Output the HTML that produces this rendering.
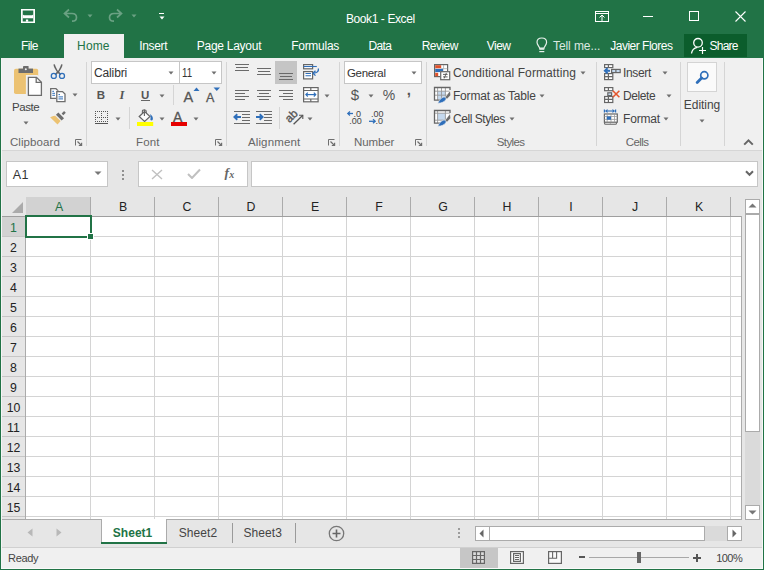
<!DOCTYPE html>
<html><head><meta charset="utf-8">
<style>
*{box-sizing:border-box}
html,body{margin:0;padding:0}
body{width:764px;height:570px;position:relative;overflow:hidden;background:#217346;font-family:"Liberation Sans",sans-serif;color:#444}
.a{position:absolute;display:block}
.t{position:absolute;white-space:nowrap;line-height:1}
</style></head><body>
<svg class="a" style="left:21px;top:9px;" width="14" height="14" viewBox="0 0 14 14"><path d="M0 0H14V14H0Z M1.7 1.4V12.6H12.3V1.4Z" fill="#fff" fill-rule="evenodd"/><path d="M1.7 5.4 L2.9 6.3 H11.1 L12.3 5.4 V9.3 H1.7Z" fill="#fff"/><rect x="4.9" y="10.5" width="2.3" height="2.2" fill="#fff"/></svg>
<svg class="a" style="left:62px;top:8px;" width="17" height="15" viewBox="0 0 17 15"><path d="M7 1.5 L2.5 5.5 L7 9.5 M2.5 5.5 H10 C13 5.5 14.5 7.5 14.5 9.5 C14.5 11.8 12.8 13.2 10 13.2" fill="none" stroke="rgba(255,255,255,0.33)" stroke-width="1.7"/></svg>
<svg class="a" style="left:86.5px;top:13.7px;" width="6" height="4" viewBox="0 0 6 4"><path d="M0.5 0.5 H5.5 L3.0 3.5 Z" fill="rgba(255,255,255,0.33)"/></svg>
<svg class="a" style="left:107px;top:8px;" width="17" height="15" viewBox="0 0 17 15"><path d="M10 1.5 L14.5 5.5 L10 9.5 M14.5 5.5 H7 C4 5.5 2.5 7.5 2.5 9.5 C2.5 11.8 4.2 13.2 7 13.2" fill="none" stroke="rgba(255,255,255,0.33)" stroke-width="1.7"/></svg>
<svg class="a" style="left:130.5px;top:13.7px;" width="6" height="4" viewBox="0 0 6 4"><path d="M0.5 0.5 H5.5 L3.0 3.5 Z" fill="rgba(255,255,255,0.33)"/></svg>
<div class="a" style="left:159px;top:13px;width:5px;height:1px;background:#ffffff;"></div>
<svg class="a" style="left:158.5px;top:15.5px;" width="6" height="4" viewBox="0 0 6 4"><path d="M0.5 0.5H5.5L3 3.5Z" fill="#fff"/></svg>
<div class="t" style="left:345.90px;top:13px;font-size:12px;color:#ffffff;letter-spacing:-0.396px;">Book1 - Excel</div>
<svg class="a" style="left:595px;top:11px;" width="14" height="11" viewBox="0 0 14 11"><rect x="0.5" y="0.5" width="13" height="10" fill="none" stroke="#fff"/><path d="M1 2.5H13" stroke="#fff"/><path d="M7 10V4 M4.5 6.5L7 4L9.5 6.5" fill="none" stroke="#fff"/></svg>
<div class="a" style="left:643px;top:16px;width:10px;height:1px;background:#ffffff;"></div>
<svg class="a" style="left:689px;top:11px;" width="10" height="10" viewBox="0 0 10 10"><rect x="0.5" y="0.5" width="9" height="9" fill="none" stroke="#fff"/></svg>
<svg class="a" style="left:734.5px;top:10.5px;" width="11" height="11" viewBox="0 0 11 11"><path d="M0.5 0.5L10.5 10.5M10.5 0.5L0.5 10.5" stroke="#fff" stroke-width="1.1"/></svg>
<div class="a" style="left:64px;top:34px;width:60px;height:24px;background:#f0f0f0;"></div>
<div class="a" style="left:684px;top:34px;width:63px;height:23px;background:#0b5d2c;"></div>
<div class="t" style="left:21.00px;top:40px;font-size:12px;color:#ffffff;letter-spacing:-0.617px;">File</div>
<div class="t" style="left:77.10px;top:40px;font-size:12px;color:#217346;letter-spacing:0.133px;">Home</div>
<div class="t" style="left:139.30px;top:40px;font-size:12px;color:#ffffff;letter-spacing:-0.340px;">Insert</div>
<div class="t" style="left:196.80px;top:40px;font-size:12px;color:#ffffff;letter-spacing:-0.270px;">Page Layout</div>
<div class="t" style="left:291.20px;top:40px;font-size:12px;color:#ffffff;letter-spacing:-0.271px;">Formulas</div>
<div class="t" style="left:368.50px;top:40px;font-size:12px;color:#ffffff;letter-spacing:-0.633px;">Data</div>
<div class="t" style="left:421.70px;top:40px;font-size:12px;color:#ffffff;letter-spacing:-0.520px;">Review</div>
<div class="t" style="left:486.80px;top:40px;font-size:12px;color:#ffffff;letter-spacing:-0.550px;">View</div>
<svg class="a" style="left:535px;top:37px;" width="14" height="17" viewBox="0 0 14 17"><path d="M4.6 11.2 C4.6 9.5 2 8.3 2 5.3 C2 2.8 4 1 6.8 1 C9.6 1 11.6 2.8 11.6 5.3 C11.6 8.3 9 9.5 9 11.2 Z" fill="none" stroke="#e8f0eb" stroke-width="1.2"/><rect x="4.3" y="11.2" width="5" height="1.6" fill="#e8f0eb"/><rect x="4.3" y="14" width="5" height="1.2" fill="#e8f0eb"/></svg>
<div class="t" style="left:553.00px;top:40px;font-size:12px;color:#dce9e1;letter-spacing:-0.078px;">Tell me...</div>
<div class="t" style="left:610.30px;top:40px;font-size:12px;color:#ffffff;letter-spacing:-0.508px;">Javier Flores</div>
<svg class="a" style="left:689px;top:37px;" width="18" height="18" viewBox="0 0 18 18"><circle cx="9" cy="5.8" r="4.3" fill="none" stroke="#fff" stroke-width="1.3"/><path d="M2.5 16.5 C3 12.5 5.5 10.8 8.3 10.3" fill="none" stroke="#fff" stroke-width="1.3"/><path d="M10 13.5H17M13.5 10V17" stroke="#fff" stroke-width="1.2"/></svg>
<div class="t" style="left:709.50px;top:40px;font-size:12px;color:#ffffff;letter-spacing:-0.750px;">Share</div>
<div class="a" style="left:1px;top:58px;width:762px;height:92px;background:#f0f0f0;"></div>
<div class="a" style="left:1px;top:150px;width:762px;height:1px;background:#d6d6d6;"></div>
<div class="a" style="left:86px;top:62px;width:1px;height:84px;background:#d5d5d5;"></div>
<div class="a" style="left:226px;top:62px;width:1px;height:84px;background:#d5d5d5;"></div>
<div class="a" style="left:339px;top:62px;width:1px;height:84px;background:#d5d5d5;"></div>
<div class="a" style="left:426px;top:62px;width:1px;height:84px;background:#d5d5d5;"></div>
<div class="a" style="left:596px;top:62px;width:1px;height:84px;background:#d5d5d5;"></div>
<div class="a" style="left:680px;top:62px;width:1px;height:84px;background:#d5d5d5;"></div>
<div class="a" style="left:724px;top:62px;width:1px;height:84px;background:#d5d5d5;"></div>
<svg class="a" style="left:13px;top:65px;" width="30" height="32" viewBox="0 0 30 32"><rect x="1" y="3.8" width="24.2" height="25.2" rx="1.8" fill="#ecc272"/>
<rect x="5.5" y="3.6" width="14.5" height="4.4" fill="#6d6d6d" stroke="#f0f0f0" stroke-width="0.0"/>
<path d="M10 4V1.6C10 1.2 10.3 1 10.7 1H15C15.4 1 15.6 1.2 15.6 1.6V4Z" fill="#6d6d6d"/>
<circle cx="12.8" cy="4.3" r="1" fill="#f0f0f0"/>
<path d="M14 11H24L29 16V31H14Z" fill="#fff" stroke="#f0f0f0" stroke-width="2.2"/>
<path d="M15.4 12.3H23.5L28.4 17.2V30.4H15.4Z" fill="#fff" stroke="#6d6d6d" stroke-width="1.3"/>
<path d="M23.2 12.3V17.4H28.4" fill="none" stroke="#6d6d6d" stroke-width="1.3"/></svg>
<div class="t" style="left:12.10px;top:102px;font-size:11.5px;color:#444;letter-spacing:-0.475px;">Paste</div>
<svg class="a" style="left:22.7px;top:120.8px;" width="6" height="4" viewBox="0 0 6 4"><path d="M0.5 0.5 H5.5 L3.0 3.5 Z" fill="#6f6f6f"/></svg>
<svg class="a" style="left:48px;top:62px;" width="20" height="20" viewBox="0 0 20 20"><path d="M5.4 2.6 C5.8 5.5 7.6 8.2 10 11.5 L11 10.8 C9 7.6 7.6 4.8 6.8 2.3Z" fill="#666"/>
<path d="M14.6 2.6 C14.2 5.5 12.4 8.2 10 11.5 L9 10.8 C11 7.6 12.4 4.8 13.2 2.3Z" fill="#666"/>
<path d="M7.3 12.7 L10 9.6 L12.7 12.7" fill="none" stroke="#666" stroke-width="1.6"/>
<circle cx="5.8" cy="13.9" r="2.5" fill="none" stroke="#2f6fba" stroke-width="1.3"/><circle cx="14" cy="13.9" r="2.5" fill="none" stroke="#2f6fba" stroke-width="1.3"/></svg>
<svg class="a" style="left:49px;top:87px;" width="18" height="16" viewBox="0 0 18 16"><path d="M1.7 1.7H7L9 3.7V11.3H1.7Z" fill="#fff" stroke="#6d6d6d" stroke-width="1.3"/>
<path d="M3.3 4.3H5 M3.3 6.3H6 M3.3 8.3H6" stroke="#2f6fba" stroke-width="1"/>
<path d="M7.8 4.6H13.5L16 7.1V14.6H7.8Z" fill="#fff" stroke="#f0f0f0" stroke-width="1.6"/>
<path d="M7.8 4.6H13.5L16 7.1V14.6H7.8Z" fill="#fff" stroke="#6d6d6d" stroke-width="1.3"/>
<path d="M9.5 7.6H11 M9.5 9.9H14 M9.5 11.9H14" stroke="#2f6fba" stroke-width="1"/></svg>
<svg class="a" style="left:71.5px;top:93.4px;" width="6" height="4" viewBox="0 0 6 4"><path d="M0.5 0.5 H5.5 L3.0 3.5 Z" fill="#6f6f6f"/></svg>
<svg class="a" style="left:48px;top:108px;" width="20" height="20" viewBox="0 0 20 20"><path d="M13.61 5.59 L16.09 3.11 L17.79 4.81 L15.31 7.29 Z" fill="#6d6d6d"/>
<path d="M7.97 6.87 L10.37 4.47 L16.03 10.13 L13.63 12.53 Z" fill="#6d6d6d"/>
<path d="M7.2 7.7 L12.6 13.1 L9.5 16.5 L2.1 9.3 L5.3 8.1 Z" fill="#ecc272"/></svg>
<div class="t" style="left:9.90px;top:137px;font-size:11.5px;color:#666;letter-spacing:0.087px;">Clipboard</div>
<svg class="a" style="left:75px;top:139px;" width="8" height="7" viewBox="0 0 8 7"><path d="M0.5 6.5V0.5H6.5" fill="none" stroke="#6f6f6f"/><path d="M2.5 2.5L6.5 6.5 M3.8 6.6H6.6V3.8" fill="none" stroke="#6f6f6f" stroke-width="1.2"/></svg>
<div class="a" style="left:91px;top:61px;width:89px;height:23px;background:#fff;border:1px solid #c6c6c6"></div>
<div class="a" style="left:179px;top:61px;width:43px;height:23px;background:#fff;border:1px solid #c6c6c6"></div>
<div class="t" style="left:94.00px;top:67px;font-size:12px;color:#333;letter-spacing:-0.133px;">Calibri</div>
<div class="t" style="left:182.20px;top:67px;font-size:12px;color:#333;transform:scaleX(0.81);transform-origin:0 0;">11</div>
<svg class="a" style="left:168.4px;top:71.0px;" width="6" height="4" viewBox="0 0 6 4"><path d="M0.5 0.5 H5.5 L3.0 3.5 Z" fill="#6f6f6f"/></svg>
<svg class="a" style="left:211.4px;top:71.0px;" width="6" height="4" viewBox="0 0 6 4"><path d="M0.5 0.5 H5.5 L3.0 3.5 Z" fill="#6f6f6f"/></svg>
<div class="t" style="left:96.80px;top:90px;font-size:11.5px;color:#555;font-weight:bold;">B</div>
<div class="t" style="left:119.50px;top:89px;font-size:12.5px;color:#555;font-weight:bold;font-family:'Liberation Serif',serif;"><i>I</i></div>
<div class="t" style="left:141.10px;top:90px;font-size:11.5px;color:#555;font-weight:bold;">U</div>
<div class="a" style="left:141px;top:100px;width:9px;height:1px;background:#666;"></div>
<svg class="a" style="left:159.4px;top:93.7px;" width="6" height="4" viewBox="0 0 6 4"><path d="M0.5 0.5 H5.5 L3.0 3.5 Z" fill="#6f6f6f"/></svg>
<div class="a" style="left:173px;top:85px;width:1px;height:20px;background:#d5d5d5;"></div>
<div class="t" style="left:183.50px;top:90px;font-size:14.5px;color:#555;-webkit-text-stroke:0.3px #555;">A</div>
<svg class="a" style="left:193px;top:87px;" width="7" height="5" viewBox="0 0 7 5"><path d="M0.5 4H6.5L3.5 0.5Z" fill="#2f6fba"/></svg>
<div class="t" style="left:206.00px;top:92px;font-size:12.5px;color:#555;-webkit-text-stroke:0.3px #555;">A</div>
<svg class="a" style="left:213px;top:87px;" width="8" height="5" viewBox="0 0 8 5"><path d="M0.5 0.5H7L3.8 4Z" fill="#2f6fba"/></svg>
<svg class="a" style="left:94px;top:110px;" width="15" height="15" viewBox="0 0 15 15"><rect x="13" y="3" width="1" height="1" fill="#555"/><rect x="13" y="9" width="1" height="1" fill="#555"/><rect x="7" y="5" width="1" height="1" fill="#555"/><rect x="5" y="11" width="1" height="1" fill="#555"/><rect x="7" y="11" width="1" height="1" fill="#555"/><rect x="1" y="1" width="1" height="1" fill="#555"/><rect x="1" y="7" width="1" height="1" fill="#555"/><rect x="3" y="1" width="1" height="1" fill="#555"/><rect x="3" y="7" width="1" height="1" fill="#555"/><rect x="9" y="11" width="1" height="1" fill="#555"/><rect x="13" y="5" width="1" height="1" fill="#555"/><rect x="5" y="1" width="1" height="1" fill="#555"/><rect x="5" y="7" width="1" height="1" fill="#555"/><rect x="11" y="11" width="1" height="1" fill="#555"/><rect x="7" y="1" width="1" height="1" fill="#555"/><rect x="7" y="7" width="1" height="1" fill="#555"/><rect x="13" y="11" width="1" height="1" fill="#555"/><rect x="9" y="1" width="1" height="1" fill="#555"/><rect x="9" y="7" width="1" height="1" fill="#555"/><rect x="1" y="3" width="1" height="1" fill="#555"/><rect x="1" y="9" width="1" height="1" fill="#555"/><rect x="11" y="1" width="1" height="1" fill="#555"/><rect x="11" y="7" width="1" height="1" fill="#555"/><rect x="13" y="1" width="1" height="1" fill="#555"/><rect x="13" y="7" width="1" height="1" fill="#555"/><rect x="7" y="3" width="1" height="1" fill="#555"/><rect x="7" y="9" width="1" height="1" fill="#555"/><rect x="1" y="5" width="1" height="1" fill="#555"/><rect x="1" y="11" width="1" height="1" fill="#555"/><rect x="3" y="11" width="1" height="1" fill="#555"/><rect x="1" y="13" width="13" height="1" fill="#555"/></svg>
<svg class="a" style="left:115.2px;top:116.7px;" width="6" height="4" viewBox="0 0 6 4"><path d="M0.5 0.5 H5.5 L3.0 3.5 Z" fill="#6f6f6f"/></svg>
<div class="a" style="left:129px;top:107px;width:1px;height:22px;background:#d5d5d5;"></div>
<svg class="a" style="left:136px;top:108px;" width="20" height="19" viewBox="0 0 20 19"><path d="M6.4 6.5V3.2C6.4 2.4 7 2 7.8 2H9C9.8 2 10.2 2.4 10.2 3.2V6.5" fill="none" stroke="#666" stroke-width="1.1"/>
<path d="M3.2 8.5 L8.6 3.6 L14 8.5 L8.6 13.4 Z" fill="#fff" stroke="#666" stroke-width="1.2"/>
<path d="M8.4 8V1.5" stroke="#666" stroke-width="1.1"/>
<path d="M14 6 C16.2 7.5 17.3 9.5 16.8 11.5 C16.4 12.5 15.2 12.7 14.4 12 L14.6 8.6Z" fill="#2f6fba"/>
<rect x="1" y="14" width="16.2" height="4" fill="#ffff00"/></svg>
<svg class="a" style="left:158.5px;top:116.7px;" width="6" height="4" viewBox="0 0 6 4"><path d="M0.5 0.5 H5.5 L3.0 3.5 Z" fill="#6f6f6f"/></svg>
<div class="t" style="left:173.00px;top:110px;font-size:14px;color:#555;-webkit-text-stroke:0.3px #555;">A</div>
<div class="a" style="left:171px;top:122px;width:16px;height:4px;background:#e60000;"></div>
<svg class="a" style="left:192.5px;top:116.7px;" width="6" height="4" viewBox="0 0 6 4"><path d="M0.5 0.5 H5.5 L3.0 3.5 Z" fill="#6f6f6f"/></svg>
<div class="t" style="left:136.10px;top:137px;font-size:11.5px;color:#666;letter-spacing:0.133px;">Font</div>
<svg class="a" style="left:215px;top:139px;" width="8" height="7" viewBox="0 0 8 7"><path d="M0.5 6.5V0.5H6.5" fill="none" stroke="#6f6f6f"/><path d="M2.5 2.5L6.5 6.5 M3.8 6.6H6.6V3.8" fill="none" stroke="#6f6f6f" stroke-width="1.2"/></svg>
<div class="a" style="left:235px;top:64px;width:14px;height:1px;background:#6a6a6a;"></div>
<div class="a" style="left:236px;top:67px;width:12px;height:1px;background:#6a6a6a;"></div>
<div class="a" style="left:235px;top:70px;width:14px;height:1px;background:#6a6a6a;"></div>
<div class="a" style="left:257px;top:68px;width:14px;height:1px;background:#6a6a6a;"></div>
<div class="a" style="left:258px;top:71px;width:12px;height:1px;background:#6a6a6a;"></div>
<div class="a" style="left:257px;top:74px;width:14px;height:1px;background:#6a6a6a;"></div>
<div class="a" style="left:275px;top:61px;width:22px;height:23px;background:#c5c5c5;"></div>
<div class="a" style="left:279px;top:73px;width:14px;height:1px;background:#6a6a6a;"></div>
<div class="a" style="left:280px;top:76px;width:12px;height:1px;background:#6a6a6a;"></div>
<div class="a" style="left:279px;top:79px;width:14px;height:1px;background:#6a6a6a;"></div>
<svg class="a" style="left:302px;top:63px;" width="19" height="17" viewBox="0 0 19 17"><rect x="1.6" y="1.6" width="9" height="4.2" fill="#fff" stroke="#666" stroke-width="1.2"/>
<path d="M1.6 3.5H14.8" stroke="#2f6fba" stroke-width="1.1"/>
<rect x="1.6" y="8.6" width="9" height="7.3" fill="#fff" stroke="#666" stroke-width="1.2"/>
<path d="M3.5 10.5H9 M3.5 12.8H9" stroke="#2f6fba" stroke-width="1.1"/>
<path d="M16.4 5.5 C16.8 8.3 15 10.2 11.5 10.2" fill="none" stroke="#2f6fba" stroke-width="1.3"/>
<path d="M13.5 7.8 L11 10.2 L13.5 12.6" fill="none" stroke="#2f6fba" stroke-width="1.3"/></svg>
<div class="a" style="left:235px;top:90px;width:14px;height:1px;background:#6a6a6a;"></div>
<div class="a" style="left:235px;top:93px;width:10px;height:1px;background:#6a6a6a;"></div>
<div class="a" style="left:235px;top:96px;width:14px;height:1px;background:#6a6a6a;"></div>
<div class="a" style="left:235px;top:99px;width:10px;height:1px;background:#6a6a6a;"></div>
<div class="a" style="left:257px;top:90px;width:14px;height:1px;background:#6a6a6a;"></div>
<div class="a" style="left:259px;top:93px;width:10px;height:1px;background:#6a6a6a;"></div>
<div class="a" style="left:257px;top:96px;width:14px;height:1px;background:#6a6a6a;"></div>
<div class="a" style="left:259px;top:99px;width:10px;height:1px;background:#6a6a6a;"></div>
<div class="a" style="left:279px;top:90px;width:14px;height:1px;background:#6a6a6a;"></div>
<div class="a" style="left:283px;top:93px;width:10px;height:1px;background:#6a6a6a;"></div>
<div class="a" style="left:279px;top:96px;width:14px;height:1px;background:#6a6a6a;"></div>
<div class="a" style="left:283px;top:99px;width:10px;height:1px;background:#6a6a6a;"></div>
<svg class="a" style="left:302px;top:86px;" width="18" height="17" viewBox="0 0 18 17"><rect x="1.6" y="1.6" width="14.5" height="14.2" fill="#fff" stroke="#666" stroke-width="1.2"/>
<path d="M1.6 4.5H16 M1.6 13H16 M8.8 1.6V4.5 M8.8 13V15.8" stroke="#666" stroke-width="1.2"/>
<path d="M4 8.6H13.6" stroke="#2f6fba" stroke-width="1.2"/><path d="M5.8 6.7L3.9 8.6L5.8 10.5 M11.8 6.7L13.7 8.6L11.8 10.5" fill="none" stroke="#2f6fba" stroke-width="1.2"/></svg>
<svg class="a" style="left:324.2px;top:93.5px;" width="6" height="4" viewBox="0 0 6 4"><path d="M0.5 0.5 H5.5 L3.0 3.5 Z" fill="#6f6f6f"/></svg>
<div class="a" style="left:234px;top:111px;width:16px;height:1px;background:#6a6a6a;"></div>
<div class="a" style="left:256px;top:111px;width:16px;height:1px;background:#6a6a6a;"></div>
<div class="a" style="left:234px;top:123px;width:16px;height:1px;background:#6a6a6a;"></div>
<div class="a" style="left:256px;top:123px;width:16px;height:1px;background:#6a6a6a;"></div>
<div class="a" style="left:242px;top:114px;width:8px;height:1px;background:#6a6a6a;"></div>
<div class="a" style="left:264px;top:114px;width:8px;height:1px;background:#6a6a6a;"></div>
<div class="a" style="left:242px;top:117px;width:8px;height:1px;background:#6a6a6a;"></div>
<div class="a" style="left:264px;top:117px;width:8px;height:1px;background:#6a6a6a;"></div>
<div class="a" style="left:242px;top:120px;width:8px;height:1px;background:#6a6a6a;"></div>
<div class="a" style="left:264px;top:120px;width:8px;height:1px;background:#6a6a6a;"></div>
<svg class="a" style="left:233px;top:113px;" width="9" height="8" viewBox="0 0 9 8"><path d="M1.5 4H8" stroke="#2f6fba" stroke-width="2"/><path d="M4.3 1.2L1.4 4L4.3 6.8" fill="none" stroke="#2f6fba" stroke-width="1.9"/></svg>
<svg class="a" style="left:255px;top:113px;" width="9" height="8" viewBox="0 0 9 8"><path d="M1 4H7.5" stroke="#2f6fba" stroke-width="2"/><path d="M4.7 1.2L7.6 4L4.7 6.8" fill="none" stroke="#2f6fba" stroke-width="1.9"/></svg>
<div class="a" style="left:279px;top:107px;width:1px;height:22px;background:#d5d5d5;"></div>
<svg class="a" style="left:284px;top:108px;" width="24" height="18" viewBox="0 0 24 18"><text x="0" y="0" transform="translate(5.6 15.2) rotate(-45)" font-family="Liberation Sans" font-size="11.5" fill="#555" stroke="#555" stroke-width="0.35">ab</text>
<path d="M9.6 16.3 L18.8 7.2" stroke="#555" stroke-width="1.3"/><path d="M15 7.2H18.8V11" fill="none" stroke="#555" stroke-width="1.1"/></svg>
<svg class="a" style="left:306.5px;top:116.5px;" width="6" height="4" viewBox="0 0 6 4"><path d="M0.5 0.5 H5.5 L3.0 3.5 Z" fill="#6f6f6f"/></svg>
<div class="t" style="left:247.90px;top:137px;font-size:11.5px;color:#666;letter-spacing:0.144px;">Alignment</div>
<svg class="a" style="left:327.5px;top:139px;" width="8" height="7" viewBox="0 0 8 7"><path d="M0.5 6.5V0.5H6.5" fill="none" stroke="#6f6f6f"/><path d="M2.5 2.5L6.5 6.5 M3.8 6.6H6.6V3.8" fill="none" stroke="#6f6f6f" stroke-width="1.2"/></svg>
<div class="a" style="left:344px;top:61px;width:78px;height:23px;background:#fff;border:1px solid #c6c6c6"></div>
<div class="t" style="left:346.90px;top:68px;font-size:11.5px;color:#333;letter-spacing:-0.300px;">General</div>
<svg class="a" style="left:411.3px;top:71.0px;" width="6" height="4" viewBox="0 0 6 4"><path d="M0.5 0.5 H5.5 L3.0 3.5 Z" fill="#6f6f6f"/></svg>
<div class="t" style="left:350.80px;top:87px;font-size:15px;color:#555;">$</div>
<svg class="a" style="left:368.4px;top:93.8px;" width="6" height="4" viewBox="0 0 6 4"><path d="M0.5 0.5 H5.5 L3.0 3.5 Z" fill="#6f6f6f"/></svg>
<div class="t" style="left:382.80px;top:88px;font-size:14px;color:#555;">%</div>
<div class="t" style="left:406.80px;top:82px;font-size:15px;color:#555;font-weight:bold;">,</div>
<svg class="a" style="left:346px;top:109px;" width="18" height="17" viewBox="0 0 18 17"><path d="M2 4.5H7" stroke="#2f6fba" stroke-width="1.3"/><path d="M4 2.5L1.8 4.5L4 6.5" fill="none" stroke="#2f6fba" stroke-width="1.3"/>
<text x="7.5" y="7.8" font-family="Liberation Sans" font-size="9" fill="#444">.0</text>
<text x="3.2" y="14.9" font-family="Liberation Sans" font-size="9" fill="#444">.00</text></svg>
<svg class="a" style="left:367px;top:109px;" width="18" height="17" viewBox="0 0 18 17"><text x="4" y="7.8" font-family="Liberation Sans" font-size="9" fill="#444">.00</text>
<path d="M2 12.3H8" stroke="#2f6fba" stroke-width="1.3"/><path d="M6 10.3L8.2 12.3L6 14.3" fill="none" stroke="#2f6fba" stroke-width="1.3"/>
<text x="8.6" y="14.9" font-family="Liberation Sans" font-size="9" fill="#444">.0</text></svg>
<div class="t" style="left:354.00px;top:137px;font-size:11.5px;color:#666;letter-spacing:-0.100px;">Number</div>
<svg class="a" style="left:415px;top:139px;" width="8" height="7" viewBox="0 0 8 7"><path d="M0.5 6.5V0.5H6.5" fill="none" stroke="#6f6f6f"/><path d="M2.5 2.5L6.5 6.5 M3.8 6.6H6.6V3.8" fill="none" stroke="#6f6f6f" stroke-width="1.2"/></svg>
<svg class="a" style="left:433px;top:63px;" width="18" height="18" viewBox="0 0 18 18"><rect x="1.6" y="1.6" width="13" height="12" fill="#fff" stroke="#666" stroke-width="1.2"/>
<rect x="2.2" y="2.2" width="6" height="3.1" fill="#e0522b"/>
<path d="M10.6 2V5.6 M8.2 5.7H14.4" stroke="#aaa" stroke-width="0.8"/>
<rect x="2.2" y="5.9" width="8" height="3.2" fill="#2f6fba"/>
<rect x="2.2" y="9.8" width="3" height="3.4" fill="#e0522b"/>
<rect x="7.2" y="8.2" width="10" height="9" fill="#f0f0f0"/>
<rect x="7.7" y="8.7" width="9" height="8" fill="#fff" stroke="#666" stroke-width="1.2"/>
<path d="M10 11.4H14.6 M10 13.9H14.6 M13.4 9.9L11.2 15.4" stroke="#555" stroke-width="0.9"/></svg>
<div class="t" style="left:453.00px;top:67px;font-size:12px;color:#444;letter-spacing:0.107px;">Conditional Formatting</div>
<svg class="a" style="left:579.5px;top:71.0px;" width="6" height="4" viewBox="0 0 6 4"><path d="M0.5 0.5 H5.5 L3.0 3.5 Z" fill="#6f6f6f"/></svg>
<svg class="a" style="left:433px;top:86px;" width="18" height="18" viewBox="0 0 18 18"><path d="M1.5 1.5H17V4.5L11 14.1H1.5Z" fill="#fff"/>
<rect x="4.6" y="5.2" width="8" height="8.4" fill="#c5d9ee"/><path d="M4.6 1.6V14 M8.5 1.6V14 M12.4 1.6V14 M1.6 5.2H17 M1.6 9.2H17" stroke="#999" stroke-width="0.9"/>
<path d="M8 14.1H1.5V1.5H17V4" fill="none" stroke="#666" stroke-width="1.3"/>
<path d="M11 12.5 L16.8 4.5 L18 4.5 L18 15 L11 15 Z" fill="#f0f0f0"/>
<path d="M12 11.8 L17 5.2 L17.4 9.2 L14 12.8 Z" fill="#6d6d6d"/>
<path d="M4.8 17.2 C6.2 14 8.3 11.6 10.8 11.1 C12.6 10.8 13.6 12.3 12.8 13.8 C11.6 15.9 8.2 17.2 4.8 17.2Z" fill="#2f6fba" stroke="#f0f0f0" stroke-width="0.6"/></svg>
<div class="t" style="left:453.00px;top:90px;font-size:12px;color:#444;letter-spacing:-0.207px;">Format as Table</div>
<svg class="a" style="left:539.0px;top:94.0px;" width="6" height="4" viewBox="0 0 6 4"><path d="M0.5 0.5 H5.5 L3.0 3.5 Z" fill="#6f6f6f"/></svg>
<svg class="a" style="left:433px;top:109px;" width="18" height="18" viewBox="0 0 18 18"><path d="M1.5 1.5H17V4.5L11 14.1H1.5Z" fill="#fff"/>
<rect x="4.6" y="4.2" width="8" height="7" fill="#c5d9ee"/><path d="M4.6 1.6V14 M12.4 1.6V14 M1.6 4.2H17 M1.6 11.2H17" stroke="#999" stroke-width="0.9"/>
<path d="M8 14.1H1.5V1.5H17V4" fill="none" stroke="#666" stroke-width="1.3"/>
<path d="M11 12.5 L16.8 4.5 L18 4.5 L18 15 L11 15 Z" fill="#f0f0f0"/>
<path d="M12 11.8 L17 5.2 L17.4 9.2 L14 12.8 Z" fill="#6d6d6d"/>
<path d="M4.8 17.2 C6.2 14 8.3 11.6 10.8 11.1 C12.6 10.8 13.6 12.3 12.8 13.8 C11.6 15.9 8.2 17.2 4.8 17.2Z" fill="#2f6fba" stroke="#f0f0f0" stroke-width="0.6"/></svg>
<div class="t" style="left:453.00px;top:113px;font-size:12px;color:#444;letter-spacing:-0.440px;">Cell Styles</div>
<svg class="a" style="left:508.5px;top:117.0px;" width="6" height="4" viewBox="0 0 6 4"><path d="M0.5 0.5 H5.5 L3.0 3.5 Z" fill="#6f6f6f"/></svg>
<div class="t" style="left:496.80px;top:137px;font-size:11.5px;color:#666;letter-spacing:-0.640px;">Styles</div>
<svg class="a" style="left:603px;top:63px;" width="19" height="18" viewBox="0 0 19 18"><rect x="1.6" y="1.6" width="8.2" height="3" fill="#fff" stroke="#666" stroke-width="1.2"/><path d="M5.4 1.6V4.6" stroke="#666" stroke-width="1.2"/>
<rect x="1.6" y="10.6" width="8.2" height="6" fill="#fff" stroke="#666" stroke-width="1.2"/><path d="M1.6 13.6H9.8 M5.4 10.6V16.6" stroke="#666" stroke-width="1.2"/>
<rect x="0.5" y="5.6" width="7.5" height="4.4" fill="#f0f0f0"/>
<path d="M2 7.8H7" stroke="#2f6fba" stroke-width="2"/><path d="M4.6 5.2L1.9 7.8L4.6 10.4" fill="none" stroke="#2f6fba" stroke-width="2"/>
<rect x="8.6" y="6.4" width="8.6" height="3.2" fill="#c5d9ee" stroke="#666" stroke-width="1.2"/><path d="M12.9 6.4V9.6" stroke="#666" stroke-width="1.2"/></svg>
<div class="t" style="left:623.00px;top:67px;font-size:12px;color:#444;letter-spacing:-0.360px;">Insert</div>
<svg class="a" style="left:661.5px;top:71.0px;" width="6" height="4" viewBox="0 0 6 4"><path d="M0.5 0.5 H5.5 L3.0 3.5 Z" fill="#6f6f6f"/></svg>
<svg class="a" style="left:603px;top:86px;" width="19" height="18" viewBox="0 0 19 18"><rect x="1.6" y="1.6" width="8.2" height="3.1" fill="#fff" stroke="#666" stroke-width="1.2"/><path d="M5.4 1.6V4.7" stroke="#666" stroke-width="1.2"/>
<rect x="4.8" y="6.8" width="3.8" height="2.8" fill="#c5d9ee" stroke="#666" stroke-width="1.2"/>
<rect x="1.6" y="10.5" width="8.2" height="6" fill="#fff" stroke="#666" stroke-width="1.2"/><path d="M1.6 13.4H9.8 M5.4 10.5V16.5" stroke="#666" stroke-width="1.2"/>
<path d="M9.8 4.8L16.4 11.2 M16.4 4.8L9.8 11.2" stroke="#e4572e" stroke-width="1.6"/></svg>
<div class="t" style="left:623.00px;top:90px;font-size:12px;color:#444;letter-spacing:-0.400px;">Delete</div>
<svg class="a" style="left:665.5px;top:94.0px;" width="6" height="4" viewBox="0 0 6 4"><path d="M0.5 0.5 H5.5 L3.0 3.5 Z" fill="#6f6f6f"/></svg>
<svg class="a" style="left:603px;top:108px;" width="19" height="19" viewBox="0 0 19 19"><path d="M1.4 1.4V4.6 M12.6 1.4V4.6" stroke="#2f6fba" stroke-width="1.2"/><path d="M2.8 3H11.2" stroke="#2f6fba" stroke-width="1.1"/>
<path d="M4.6 1.6L2.8 3L4.6 4.4 M9.4 1.6L11.2 3L9.4 4.4" fill="none" stroke="#2f6fba" stroke-width="1.1"/>
<rect x="1.4" y="6" width="12.9" height="8.2" fill="#fff" stroke="#666" stroke-width="1.2"/>
<path d="M1.4 8.5H14.3 M1.4 11.4H14.3 M4.2 6V14.2 M8 6V14.2 M11.5 6V14.2" stroke="#9a9a9a" stroke-width="0.8"/>
<rect x="3.8" y="8.4" width="4.2" height="3.3" fill="#2f6fba"/>
<path d="M1.6 14.2V15.5C1.6 16 2 16.3 2.5 16.3H6.5C7 16.3 7.4 16 7.4 15.5 M7.4 15.5C7.4 16 7.8 16.3 8.3 16.3H12.5C13 16.3 13.4 16 13.4 15.5V14.2" fill="none" stroke="#666" stroke-width="1.1"/></svg>
<div class="t" style="left:623.00px;top:113px;font-size:12px;color:#444;letter-spacing:-0.160px;">Format</div>
<svg class="a" style="left:663.3px;top:117.0px;" width="6" height="4" viewBox="0 0 6 4"><path d="M0.5 0.5 H5.5 L3.0 3.5 Z" fill="#6f6f6f"/></svg>
<div class="t" style="left:625.70px;top:137px;font-size:11.5px;color:#666;letter-spacing:-0.588px;">Cells</div>
<div class="a" style="left:687px;top:62px;width:30px;height:30px;background:#fafafa;border:1px solid #d4d4d4"></div>
<svg class="a" style="left:695px;top:70px;" width="15" height="14" viewBox="0 0 15 14"><circle cx="9.3" cy="5.3" r="3.6" fill="none" stroke="#2f6fba" stroke-width="1.7"/><path d="M6.6 8L2.2 12.4" stroke="#2f6fba" stroke-width="2.8" stroke-linecap="round"/></svg>
<div class="t" style="left:683.80px;top:99px;font-size:12px;color:#444;letter-spacing:-0.033px;">Editing</div>
<svg class="a" style="left:699.3px;top:118.5px;" width="6" height="4" viewBox="0 0 6 4"><path d="M0.5 0.5 H5.5 L3.0 3.5 Z" fill="#6f6f6f"/></svg>
<svg class="a" style="left:743px;top:138px;" width="11" height="8" viewBox="0 0 11 8"><path d="M1.2 6.6L5.5 2.3L9.8 6.6" fill="none" stroke="#666" stroke-width="2"/></svg>
<div class="a" style="left:1px;top:151px;width:762px;height:369px;background:#e6e6e6;"></div>
<div class="a" style="left:6px;top:161px;width:102px;height:26px;background:#fff;border:1px solid #c6c6c6"></div>
<div class="t" style="left:12.80px;top:169px;font-size:12.5px;color:#333;letter-spacing:0.300px;">A1</div>
<svg class="a" style="left:93.5px;top:171px;" width="8" height="5" viewBox="0 0 8 5"><path d="M0.5 0.5H7.5L4 4Z" fill="#777"/></svg>
<div class="a" style="left:122px;top:169.5px;width:2px;height:2px;background:#909090;"></div>
<div class="a" style="left:122px;top:173.5px;width:2px;height:2px;background:#909090;"></div>
<div class="a" style="left:122px;top:177.5px;width:2px;height:2px;background:#909090;"></div>
<div class="a" style="left:138px;top:161px;width:110px;height:26px;background:#fff;border:1px solid #c6c6c6"></div>
<svg class="a" style="left:151px;top:169px;" width="12" height="11" viewBox="0 0 12 11"><path d="M1 1L11 10M11 1L1 10" stroke="#c0c0c0" stroke-width="1.4"/></svg>
<svg class="a" style="left:187px;top:168px;" width="14" height="11" viewBox="0 0 14 11"><path d="M1 6L5 10L13 1.5" fill="none" stroke="#c0c0c0" stroke-width="2"/></svg>
<div class="t" style="left:224.50px;top:166px;font-size:13.5px;color:#666;font-weight:bold;font-family:'Liberation Serif',serif;"><i>f</i></div>
<div class="t" style="left:229.30px;top:170px;font-size:10px;color:#666;font-weight:bold;font-family:'Liberation Serif',serif;"><i>x</i></div>
<div class="a" style="left:251px;top:161px;width:507px;height:26px;background:#fff;border:1px solid #c6c6c6"></div>
<svg class="a" style="left:745px;top:170px;" width="9" height="7" viewBox="0 0 9 7"><path d="M1 1.2L4.5 4.8L8 1.2" fill="none" stroke="#666" stroke-width="2"/></svg>
<svg class="a" style="left:11px;top:201px;" width="13" height="13" viewBox="0 0 13 13"><path d="M12 1V12H1Z" fill="#ababab"/></svg>
<div class="a" style="left:26px;top:217px;width:715px;height:302px;background:#fff;"></div>
<div class="a" style="left:26px;top:197px;width:64px;height:19px;background:#d2d2d2;"></div>
<div class="a" style="left:1px;top:217px;width:24px;height:19px;background:#d2d2d2;"></div>
<div class="a" style="left:90px;top:197px;width:1px;height:19px;background:#ababab;"></div>
<div class="a" style="left:90px;top:217px;width:1px;height:302px;background:#d4d4d4;"></div>
<div class="t" style="left:9.00px;width:100px;text-align:center;top:201px;font-size:12.3px;color:#217346;">A</div>
<div class="a" style="left:154px;top:197px;width:1px;height:19px;background:#ababab;"></div>
<div class="a" style="left:154px;top:217px;width:1px;height:302px;background:#d4d4d4;"></div>
<div class="t" style="left:73.00px;width:100px;text-align:center;top:201px;font-size:12.3px;color:#222;">B</div>
<div class="a" style="left:218px;top:197px;width:1px;height:19px;background:#ababab;"></div>
<div class="a" style="left:218px;top:217px;width:1px;height:302px;background:#d4d4d4;"></div>
<div class="t" style="left:137.00px;width:100px;text-align:center;top:201px;font-size:12.3px;color:#222;">C</div>
<div class="a" style="left:282px;top:197px;width:1px;height:19px;background:#ababab;"></div>
<div class="a" style="left:282px;top:217px;width:1px;height:302px;background:#d4d4d4;"></div>
<div class="t" style="left:201.00px;width:100px;text-align:center;top:201px;font-size:12.3px;color:#222;">D</div>
<div class="a" style="left:346px;top:197px;width:1px;height:19px;background:#ababab;"></div>
<div class="a" style="left:346px;top:217px;width:1px;height:302px;background:#d4d4d4;"></div>
<div class="t" style="left:265.00px;width:100px;text-align:center;top:201px;font-size:12.3px;color:#222;">E</div>
<div class="a" style="left:410px;top:197px;width:1px;height:19px;background:#ababab;"></div>
<div class="a" style="left:410px;top:217px;width:1px;height:302px;background:#d4d4d4;"></div>
<div class="t" style="left:329.00px;width:100px;text-align:center;top:201px;font-size:12.3px;color:#222;">F</div>
<div class="a" style="left:474px;top:197px;width:1px;height:19px;background:#ababab;"></div>
<div class="a" style="left:474px;top:217px;width:1px;height:302px;background:#d4d4d4;"></div>
<div class="t" style="left:393.00px;width:100px;text-align:center;top:201px;font-size:12.3px;color:#222;">G</div>
<div class="a" style="left:538px;top:197px;width:1px;height:19px;background:#ababab;"></div>
<div class="a" style="left:538px;top:217px;width:1px;height:302px;background:#d4d4d4;"></div>
<div class="t" style="left:457.00px;width:100px;text-align:center;top:201px;font-size:12.3px;color:#222;">H</div>
<div class="a" style="left:602px;top:197px;width:1px;height:19px;background:#ababab;"></div>
<div class="a" style="left:602px;top:217px;width:1px;height:302px;background:#d4d4d4;"></div>
<div class="t" style="left:521.00px;width:100px;text-align:center;top:201px;font-size:12.3px;color:#222;">I</div>
<div class="a" style="left:666px;top:197px;width:1px;height:19px;background:#ababab;"></div>
<div class="a" style="left:666px;top:217px;width:1px;height:302px;background:#d4d4d4;"></div>
<div class="t" style="left:585.00px;width:100px;text-align:center;top:201px;font-size:12.3px;color:#222;">J</div>
<div class="a" style="left:730px;top:197px;width:1px;height:19px;background:#ababab;"></div>
<div class="a" style="left:730px;top:217px;width:1px;height:302px;background:#d4d4d4;"></div>
<div class="t" style="left:649.00px;width:100px;text-align:center;top:201px;font-size:12.3px;color:#222;">K</div>
<div class="a" style="left:26px;top:197px;width:0px;height:19px;background:#ababab;"></div>
<div class="a" style="left:26px;top:236px;width:715px;height:1px;background:#d4d4d4;"></div>
<div class="a" style="left:1px;top:236px;width:24px;height:1px;background:#c6c6c6;"></div>
<div class="t" style="left:-36.50px;width:100px;text-align:center;top:222px;font-size:12.3px;color:#217346;">1</div>
<div class="a" style="left:26px;top:256px;width:715px;height:1px;background:#d4d4d4;"></div>
<div class="a" style="left:1px;top:256px;width:24px;height:1px;background:#c6c6c6;"></div>
<div class="t" style="left:-36.50px;width:100px;text-align:center;top:242px;font-size:12.3px;color:#222;">2</div>
<div class="a" style="left:26px;top:276px;width:715px;height:1px;background:#d4d4d4;"></div>
<div class="a" style="left:1px;top:276px;width:24px;height:1px;background:#c6c6c6;"></div>
<div class="t" style="left:-36.50px;width:100px;text-align:center;top:262px;font-size:12.3px;color:#222;">3</div>
<div class="a" style="left:26px;top:296px;width:715px;height:1px;background:#d4d4d4;"></div>
<div class="a" style="left:1px;top:296px;width:24px;height:1px;background:#c6c6c6;"></div>
<div class="t" style="left:-36.50px;width:100px;text-align:center;top:282px;font-size:12.3px;color:#222;">4</div>
<div class="a" style="left:26px;top:316px;width:715px;height:1px;background:#d4d4d4;"></div>
<div class="a" style="left:1px;top:316px;width:24px;height:1px;background:#c6c6c6;"></div>
<div class="t" style="left:-36.50px;width:100px;text-align:center;top:302px;font-size:12.3px;color:#222;">5</div>
<div class="a" style="left:26px;top:336px;width:715px;height:1px;background:#d4d4d4;"></div>
<div class="a" style="left:1px;top:336px;width:24px;height:1px;background:#c6c6c6;"></div>
<div class="t" style="left:-36.50px;width:100px;text-align:center;top:322px;font-size:12.3px;color:#222;">6</div>
<div class="a" style="left:26px;top:356px;width:715px;height:1px;background:#d4d4d4;"></div>
<div class="a" style="left:1px;top:356px;width:24px;height:1px;background:#c6c6c6;"></div>
<div class="t" style="left:-36.50px;width:100px;text-align:center;top:342px;font-size:12.3px;color:#222;">7</div>
<div class="a" style="left:26px;top:376px;width:715px;height:1px;background:#d4d4d4;"></div>
<div class="a" style="left:1px;top:376px;width:24px;height:1px;background:#c6c6c6;"></div>
<div class="t" style="left:-36.50px;width:100px;text-align:center;top:362px;font-size:12.3px;color:#222;">8</div>
<div class="a" style="left:26px;top:396px;width:715px;height:1px;background:#d4d4d4;"></div>
<div class="a" style="left:1px;top:396px;width:24px;height:1px;background:#c6c6c6;"></div>
<div class="t" style="left:-36.50px;width:100px;text-align:center;top:382px;font-size:12.3px;color:#222;">9</div>
<div class="a" style="left:26px;top:416px;width:715px;height:1px;background:#d4d4d4;"></div>
<div class="a" style="left:1px;top:416px;width:24px;height:1px;background:#c6c6c6;"></div>
<div class="t" style="left:-36.50px;width:100px;text-align:center;top:402px;font-size:12.3px;color:#222;">10</div>
<div class="a" style="left:26px;top:436px;width:715px;height:1px;background:#d4d4d4;"></div>
<div class="a" style="left:1px;top:436px;width:24px;height:1px;background:#c6c6c6;"></div>
<div class="t" style="left:-36.50px;width:100px;text-align:center;top:422px;font-size:12.3px;color:#222;">11</div>
<div class="a" style="left:26px;top:456px;width:715px;height:1px;background:#d4d4d4;"></div>
<div class="a" style="left:1px;top:456px;width:24px;height:1px;background:#c6c6c6;"></div>
<div class="t" style="left:-36.50px;width:100px;text-align:center;top:442px;font-size:12.3px;color:#222;">12</div>
<div class="a" style="left:26px;top:476px;width:715px;height:1px;background:#d4d4d4;"></div>
<div class="a" style="left:1px;top:476px;width:24px;height:1px;background:#c6c6c6;"></div>
<div class="t" style="left:-36.50px;width:100px;text-align:center;top:462px;font-size:12.3px;color:#222;">13</div>
<div class="a" style="left:26px;top:496px;width:715px;height:1px;background:#d4d4d4;"></div>
<div class="a" style="left:1px;top:496px;width:24px;height:1px;background:#c6c6c6;"></div>
<div class="t" style="left:-36.50px;width:100px;text-align:center;top:482px;font-size:12.3px;color:#222;">14</div>
<div class="a" style="left:26px;top:516px;width:715px;height:1px;background:#d4d4d4;"></div>
<div class="a" style="left:1px;top:516px;width:24px;height:1px;background:#c6c6c6;"></div>
<div class="t" style="left:-36.50px;width:100px;text-align:center;top:502px;font-size:12.3px;color:#222;">15</div>
<div class="a" style="left:1px;top:216px;width:741px;height:1px;background:#9f9f9f;"></div>
<div class="a" style="left:25px;top:217px;width:1px;height:302px;background:#ababab;"></div>
<div class="a" style="left:741px;top:216px;width:1px;height:304px;background:#ababab;"></div>
<div class="a" style="left:1px;top:519px;width:741px;height:1px;background:#ababab;"></div>
<div class="a" style="left:25px;top:215px;width:67px;height:23px;background:transparent;border:2px solid #217346"></div>
<div class="a" style="left:87px;top:233px;width:7px;height:7px;background:#fff;"></div>
<div class="a" style="left:88px;top:234px;width:5px;height:5px;background:#217346;"></div>
<div class="a" style="left:745px;top:199px;width:15px;height:321px;background:#dadada;"></div>
<div class="a" style="left:745px;top:199px;width:15px;height:15px;background:#fff;border:1px solid #ababab"></div>
<svg class="a" style="left:748px;top:203px;" width="9" height="5" viewBox="0 0 9 5"><path d="M0.5 4.5H8.5L4.5 0.5Z" fill="#777"/></svg>
<div class="a" style="left:745px;top:214px;width:15px;height:218px;background:#fff;border:1px solid #ababab"></div>
<div class="a" style="left:745px;top:505px;width:15px;height:15px;background:#fff;border:1px solid #ababab"></div>
<svg class="a" style="left:748px;top:510px;" width="9" height="5" viewBox="0 0 9 5"><path d="M0.5 0.5H8.5L4.5 4.5Z" fill="#777"/></svg>
<div class="a" style="left:1px;top:520px;width:762px;height:27px;background:#e6e6e6;"></div>
<svg class="a" style="left:27px;top:528px;" width="6" height="9" viewBox="0 0 6 9"><path d="M5.5 0.5V8.5L0.5 4.5Z" fill="#b8b8b8"/></svg>
<svg class="a" style="left:56px;top:528px;" width="6" height="9" viewBox="0 0 6 9"><path d="M0.5 0.5V8.5L5.5 4.5Z" fill="#b8b8b8"/></svg>
<div class="a" style="left:101px;top:519px;width:66px;height:25px;background:#fff;border-left:1px solid #ababab;border-right:1px solid #ababab"></div>
<div class="a" style="left:101px;top:542px;width:66px;height:2px;background:#217346;"></div>
<div class="t" style="left:112.80px;top:527px;font-size:12px;color:#217346;font-weight:bold;letter-spacing:0.030px;">Sheet1</div>
<div class="t" style="left:178.70px;top:527px;font-size:12px;color:#444;letter-spacing:0.090px;">Sheet2</div>
<div class="a" style="left:232px;top:523px;width:1px;height:20px;background:#9a9a9a;"></div>
<div class="t" style="left:243.50px;top:527px;font-size:12px;color:#444;letter-spacing:0.070px;">Sheet3</div>
<div class="a" style="left:295px;top:523px;width:1px;height:20px;background:#9a9a9a;"></div>
<svg class="a" style="left:328px;top:525px;" width="17" height="17" viewBox="0 0 17 17"><circle cx="8.5" cy="8.5" r="7.2" fill="none" stroke="#777" stroke-width="1.3"/><path d="M4.5 8.5H12.5M8.5 4.5V12.5" stroke="#666" stroke-width="1.6"/></svg>
<div class="a" style="left:458px;top:528px;width:2px;height:2px;background:#9c9c9c;"></div>
<div class="a" style="left:458px;top:532px;width:2px;height:2px;background:#9c9c9c;"></div>
<div class="a" style="left:458px;top:536px;width:2px;height:2px;background:#9c9c9c;"></div>
<div class="a" style="left:475px;top:526px;width:267px;height:15px;background:#dadada;"></div>
<div class="a" style="left:475px;top:526px;width:15px;height:15px;background:#fff;border:1px solid #ababab"></div>
<svg class="a" style="left:479px;top:529px;" width="6" height="9" viewBox="0 0 6 9"><path d="M4.5 0.5V8.5L0.5 4.5Z" fill="#666"/></svg>
<div class="a" style="left:489px;top:526px;width:216px;height:15px;background:#fff;border:1px solid #ababab"></div>
<div class="a" style="left:727px;top:526px;width:15px;height:15px;background:#fff;border:1px solid #ababab"></div>
<svg class="a" style="left:732px;top:529px;" width="6" height="9" viewBox="0 0 6 9"><path d="M0.5 0.5V8.5L4.5 4.5Z" fill="#666"/></svg>
<div class="a" style="left:1px;top:547px;width:762px;height:22px;background:#f0f0f0;border-top:1px solid #d0d0d0"></div>
<div class="t" style="left:8.10px;top:553px;font-size:11px;color:#444;letter-spacing:-0.350px;">Ready</div>
<div class="a" style="left:460px;top:548px;width:38px;height:21px;background:#c6c6c6;"></div>
<svg class="a" style="left:472px;top:551px;" width="13" height="13" viewBox="0 0 13 13"><rect x="0.6" y="0.6" width="11.8" height="11.8" fill="#dcdcdc"/><path d="M0.6 0.6H12.4V12.4H0.6Z M4.5 0.6V12.4 M8.5 0.6V12.4 M0.6 4.5H12.4 M0.6 8.5H12.4" fill="none" stroke="#666" stroke-width="1.2"/></svg>
<svg class="a" style="left:510px;top:551px;" width="14" height="13" viewBox="0 0 14 13"><rect x="0.6" y="0.6" width="12.8" height="11.8" fill="#fafafa" stroke="#666" stroke-width="1.2"/><rect x="3.6" y="2.6" width="6.8" height="7.8" fill="none" stroke="#666" stroke-width="1.2"/><path d="M5 4.5H9M5 6.5H9M5 8.5H9" stroke="#666"/></svg>
<svg class="a" style="left:548px;top:551px;" width="14" height="13" viewBox="0 0 14 13"><rect x="0.6" y="0.6" width="12.8" height="11.8" fill="#fafafa" stroke="#666" stroke-width="1.2"/><path d="M0.6 7.2H8.6V0.6 M4.6 0.6V7.2" fill="none" stroke="#666" stroke-width="1.1"/></svg>
<div class="a" style="left:579px;top:556px;width:6px;height:2px;background:#555;"></div>
<div class="a" style="left:589px;top:557px;width:100px;height:1px;background:#a8a8a8;"></div>
<div class="a" style="left:637px;top:552px;width:4px;height:11px;background:#666;"></div>
<div class="a" style="left:693px;top:557px;width:8px;height:2px;background:#555;"></div>
<div class="a" style="left:696px;top:554px;width:2px;height:8px;background:#555;"></div>
<div class="t" style="left:716.30px;top:553px;font-size:11px;color:#444;letter-spacing:-0.583px;">100%</div>
<div class="a" style="left:1px;top:58px;width:1px;height:511px;background:#f5f5f5;"></div>
<div class="a" style="left:762px;top:58px;width:1px;height:511px;background:#f7f7f7;"></div>
<div class="a" style="left:1px;top:568px;width:762px;height:1px;background:#fafafa;"></div>
<div class="a" style="left:0px;top:0px;width:1px;height:570px;background:#217346;"></div>
<div class="a" style="left:763px;top:0px;width:1px;height:570px;background:#217346;"></div>
<div class="a" style="left:0px;top:569px;width:764px;height:1px;background:#217346;"></div>
</body></html>
